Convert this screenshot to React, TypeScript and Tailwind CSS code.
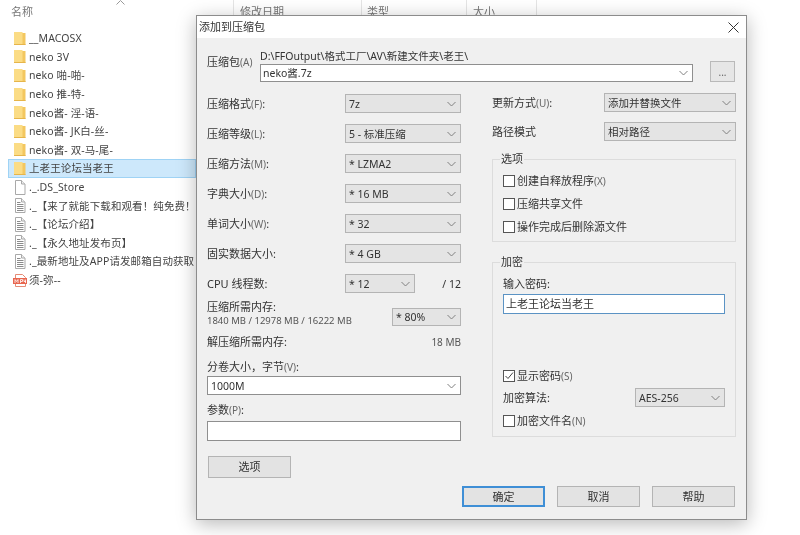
import type { ReactNode } from "react";

const files: { name: string; icon: "folder" | "blank" | "text" | "video"; selected?: boolean }[] = [
  { name: "__MACOSX", icon: "folder" },
  { name: "neko 3V", icon: "folder" },
  { name: "neko 啪-啪-", icon: "folder" },
  { name: "neko 推-特-", icon: "folder" },
  { name: "neko酱-  淫-语-", icon: "folder" },
  { name: "neko酱- JK白-丝-", icon: "folder" },
  { name: "neko酱- 双-马-尾-", icon: "folder" },
  { name: "上老王论坛当老王", icon: "folder", selected: true },
  { name: "._.DS_Store", icon: "blank" },
  { name: "._【来了就能下载和观看！纯免费！", icon: "text" },
  { name: "._【论坛介绍】", icon: "text" },
  { name: "._【永久地址发布页】", icon: "text" },
  { name: "._最新地址及APP请发邮箱自动获取！", icon: "text" },
  { name: "须-弥--", icon: "video" },
];

function FileIcon({ type }: { type: string }) {
  if (type === "folder") {
    return (
      <svg width="14" height="15" viewBox="0 0 14 15" className="shrink-0">
        <path d="M1 1h8l1 1h1v12H1z" fill="#fbdc85" />
        <path d="M9.500 2H12.500V14H9.500z" fill="#f3c75f" />
        <path d="M1 13.500h11.500" stroke="#e6b54a" />
      </svg>
    );
  }
  if (type === "video") {
    return (
      <svg width="14" height="15" viewBox="0 0 14 15" className="shrink-0">
        <path d="M2.500 1.500h7l3 3v9h-10z" fill="#fff" stroke="#e58b76" />
        <rect x="0" y="5" width="14" height="6" fill="#e8664f" />
        <path d="M2 10V6.500l1.500 2 1.500-2V10M7.500 6.500V10M7.500 6.500h2v2h-2M11 6.500v2h2M12.500 6.500V10" fill="none" stroke="#fff" strokeWidth="0.8" />
      </svg>
    );
  }
  return (
    <svg width="14" height="15" viewBox="0 0 14 15" className="shrink-0">
      <path d="M2.500 .5h6l3.500 3.500v10.500h-9.500z" fill="#fff" stroke="#a9a9a9" />
      <path d="M8.500 .5v3.500h3.500" fill="#eee" stroke="#a9a9a9" />
      {type === "text" && (
        <path d="M4 4.500h3.500M4 6.500h6.500M4 8.500h6.500M4 10.500h6.500M4 12.500h6.500" stroke="#8a8a8a" />
      )}
    </svg>
  );
}

function Chevron({ className }: { className?: string }) {
  return (
    <svg width="9" height="6" viewBox="0 0 9 6" className={className}>
      <path d="M.5 1l4 4 4-4" fill="none" stroke="#808080" />
    </svg>
  );
}

function Combo({ value, className, white }: { value: string; className: string; white?: boolean }) {
  return (
    <div
      className={`flex items-center justify-between pl-[3px] pr-[4px] border text-[10.500px] ${
        white ? "bg-white border-[#8f8f8f]" : "bg-[#e4e4e4] border-[#b4b4b4]"
      } ${className}`}
    >
      <span className="whitespace-pre truncate">{value}</span>
      <Chevron className="shrink-0" />
    </div>
  );
}

function Row({ label, children }: { label: ReactNode; children: ReactNode }) {
  return (
    <div className="flex items-center justify-between h-[19px] mb-[11px]">
      <span className="whitespace-pre">{label}</span>
      {children}
    </div>
  );
}

function Key({ k }: { k: string }) {
  return <span className="text-[#666] text-[10px]">{k}</span>;
}

function Check({ label, checked, className }: { label: ReactNode; checked?: boolean; className: string }) {
  return (
    <div className={`flex items-center gap-[2px] h-[14px] ${className}`}>
      <span className="w-[12px] h-[12px] border border-[#555] bg-white shrink-0 flex items-center justify-center">
        {checked && (
          <svg width="10" height="10" viewBox="0 0 10 10">
            <path d="M1.500 5l2.500 2.500 5-6" fill="none" stroke="#444" />
          </svg>
        )}
      </span>
      <span className="whitespace-pre">{label}</span>
    </div>
  );
}

function Btn({ label, primary, className }: { label: string; primary?: boolean; className: string }) {
  return (
    <div
      className={`flex items-center justify-center bg-[#e3e3e3] ${
        primary ? "border-2 border-[#3f8fd6]" : "border border-[#b4b4b4]"
      } ${className}`}
    >
      {label}
    </div>
  );
}

export default function App() {
  return (
    <div className="relative w-[800px] h-[535px] overflow-hidden bg-white text-[11px] leading-[14px] text-[#333] [font-family:'Noto_Sans','Noto_Sans_CJK_SC',sans-serif] blur-[0.35px]">
      {/* Explorer behind the dialog */}
      <div className="relative flex h-[22px] text-[#777]">
        <div className="w-[234px] pl-[11px] pt-[5px] border-r border-[#e5e5e5]">名称</div>
        <div className="w-[128px] pl-[6px] pt-[5px] border-r border-[#e5e5e5]">修改日期</div>
        <div className="w-[105px] pl-[5px] pt-[5px] border-r border-[#e5e5e5]">类型</div>
        <div className="w-[70px] pl-[6px] pt-[5px] border-r border-[#e5e5e5]">大小</div>
        <svg width="9" height="5" viewBox="0 0 9 5" className="absolute left-[116px] top-0">
          <path d="M.5 4.500l4-4 4 4" fill="none" stroke="#999" />
        </svg>
      </div>
      <div className="pt-[7px] pl-[8px] w-[196px]">
        {files.map(f => (
          <div
            key={f.name}
            className={`flex items-center gap-[2px] h-[18.600px] pl-[4px] whitespace-nowrap overflow-hidden border ${
              f.selected ? "bg-[#cde8fb] border-[#9fd3f5]" : "border-transparent"
            }`}
          >
            <FileIcon type={f.icon} />
            <span className="text-[#444] text-[10.500px] tracking-[0.1px]">{f.name}</span>
          </div>
        ))}
      </div>

      {/* Dialog */}
      <div className="absolute left-[196px] top-[15px] w-[551px] h-[505px] border border-[#8c8c8c] bg-[#f0f0f0] shadow-[0_4px_18px_rgba(0,0,0,0.28)] flex flex-col">
        <div className="h-[22px] bg-white flex items-center justify-between pl-[2px] pr-[7px] shrink-0">
          <span>添加到压缩包</span>
          <svg width="11" height="11" viewBox="0 0 11 11">
            <path d="M.5.5l10 10M10.500.5l-10 10" stroke="#333" />
          </svg>
        </div>

        {/* Archive path */}
        <div className="flex pl-[10px] pr-[11px] pt-[11px] h-[55px] shrink-0">
          <div className="w-[53px] pt-[6px] whitespace-pre">
            压缩包<Key k="(A)" />
          </div>
          <div className="w-[433px]">
            <div className="h-[15px] text-[10.500px] leading-[15px] whitespace-pre">D:\FFOutput\格式工厂\AV\新建文件夹\老王\</div>
            <Combo value="neko酱.7z" white className="h-[18px] w-[433px] !pl-[2px]" />
          </div>
          <div className="ml-[17px] mt-[12px] w-[25px] h-[21px] border border-[#b9b9b9] bg-[#e6e6e6] flex items-center justify-center text-[10px] text-[#666]">
            ...
          </div>
        </div>

        {/* Main columns */}
        <div className="flex pl-[10px] h-[386px] shrink-0">
          <div className="w-[254px] pt-[1px] shrink-0">
            <Row label={<>压缩格式<Key k="(F)" />:</>}>
              <Combo value="7z" className="w-[116px] h-[19px]" />
            </Row>
            <Row label={<>压缩等级<Key k="(L)" />:</>}>
              <Combo value="5 - 标准压缩" className="w-[116px] h-[19px]" />
            </Row>
            <Row label={<>压缩方法<Key k="(M)" />:</>}>
              <Combo value="* LZMA2" className="w-[116px] h-[19px]" />
            </Row>
            <Row label={<>字典大小<Key k="(D)" />:</>}>
              <Combo value="* 16 MB" className="w-[116px] h-[19px]" />
            </Row>
            <Row label={<>单词大小<Key k="(W)" />:</>}>
              <Combo value="* 32" className="w-[116px] h-[19px]" />
            </Row>
            <Row label="固实数据大小:">
              <Combo value="* 4 GB" className="w-[116px] h-[19px]" />
            </Row>
            <div className="flex items-center h-[19px]">
              <span className="w-[138px]">CPU 线程数:</span>
              <Combo value="* 12" className="w-[70px] h-[19px]" />
              <span className="ml-auto text-[10.500px]">/ 12</span>
            </div>
            <div className="flex justify-between mt-[12px] h-[27px]">
              <div className="-mt-[5px]">
                <div>压缩所需内存:</div>
                <div className="text-[#555] text-[9.500px] whitespace-pre">1840 MB / 12978 MB / 16222 MB</div>
              </div>
              <Combo value="* 80%" className="w-[69px] h-[18px] mt-[3px]" />
            </div>
            <div className="flex justify-between mt-[3px] h-[14px]">
              <span>解压缩所需内存:</span>
              <span className="text-[10px] text-[#555]">18 MB</span>
            </div>
            <div className="mt-[11px] h-[14px]">
              分卷大小，字节<Key k="(V)" />:
            </div>
            <Combo value="1000M" white className="w-[254px] h-[19px] mt-[2px]" />
            <div className="mt-[8px] h-[14px]">
              参数<Key k="(P)" />:
            </div>
            <div className="w-[254px] h-[20px] mt-[4px] bg-white border border-[#8f8f8f]" />
            <Btn label="选项" className="w-[83px] h-[22px] mt-[15px] ml-[1px]" />
          </div>

          <div className="w-[244px] ml-[31px] shrink-0">
            <div className="flex items-center justify-between h-[19px] mb-[10px]">
              <span>更新方式<Key k="(U)" />:</span>
              <Combo value="添加并替换文件" className="w-[132px] h-[19px]" />
            </div>
            <div className="flex items-center justify-between h-[19px]">
              <span>路径模式</span>
              <Combo value="相对路径" className="w-[132px] h-[19px]" />
            </div>
            <fieldset className="mt-[11px] h-[90px] border border-[#dcdcdc] px-[10px]">
              <legend className="-ml-[3px] px-[1px]">选项</legend>
              <Check label={<>创建自释放程序<Key k="(X)" /></>} className="mt-[8px]" />
              <Check label="压缩共享文件" className="mt-[9px]" />
              <Check label="操作完成后删除源文件" className="mt-[9px]" />
            </fieldset>
            <fieldset className="mt-[13px] h-[182px] border border-[#dcdcdc] px-[10px]">
              <legend className="-ml-[3px] px-[1px]">加密</legend>
              <div className="mt-[8px]">输入密码:</div>
              <div className="w-[222px] h-[20px] mt-[3px] bg-white border border-[#5b93c4] pl-[2px] flex items-center">
                上老王论坛当老王
              </div>
              <Check label={<>显示密码<Key k="(S)" /></>} checked className="mt-[55px]" />
              <div className="flex items-center justify-between mt-[5px]">
                <span>加密算法:</span>
                <Combo value="AES-256" className="w-[90px] h-[19px]" />
              </div>
              <Check label={<>加密文件名<Key k="(N)" /></>} className="mt-[7px]" />
            </fieldset>
          </div>
        </div>

        {/* Footer buttons */}
        <div className="flex justify-end gap-[12px] pr-[11px] mt-[7px]">
          <Btn label="确定" primary className="w-[83px] h-[21px]" />
          <Btn label="取消" className="w-[83px] h-[21px]" />
          <Btn label="帮助" className="w-[83px] h-[21px]" />
        </div>
      </div>
    </div>
  );
}
